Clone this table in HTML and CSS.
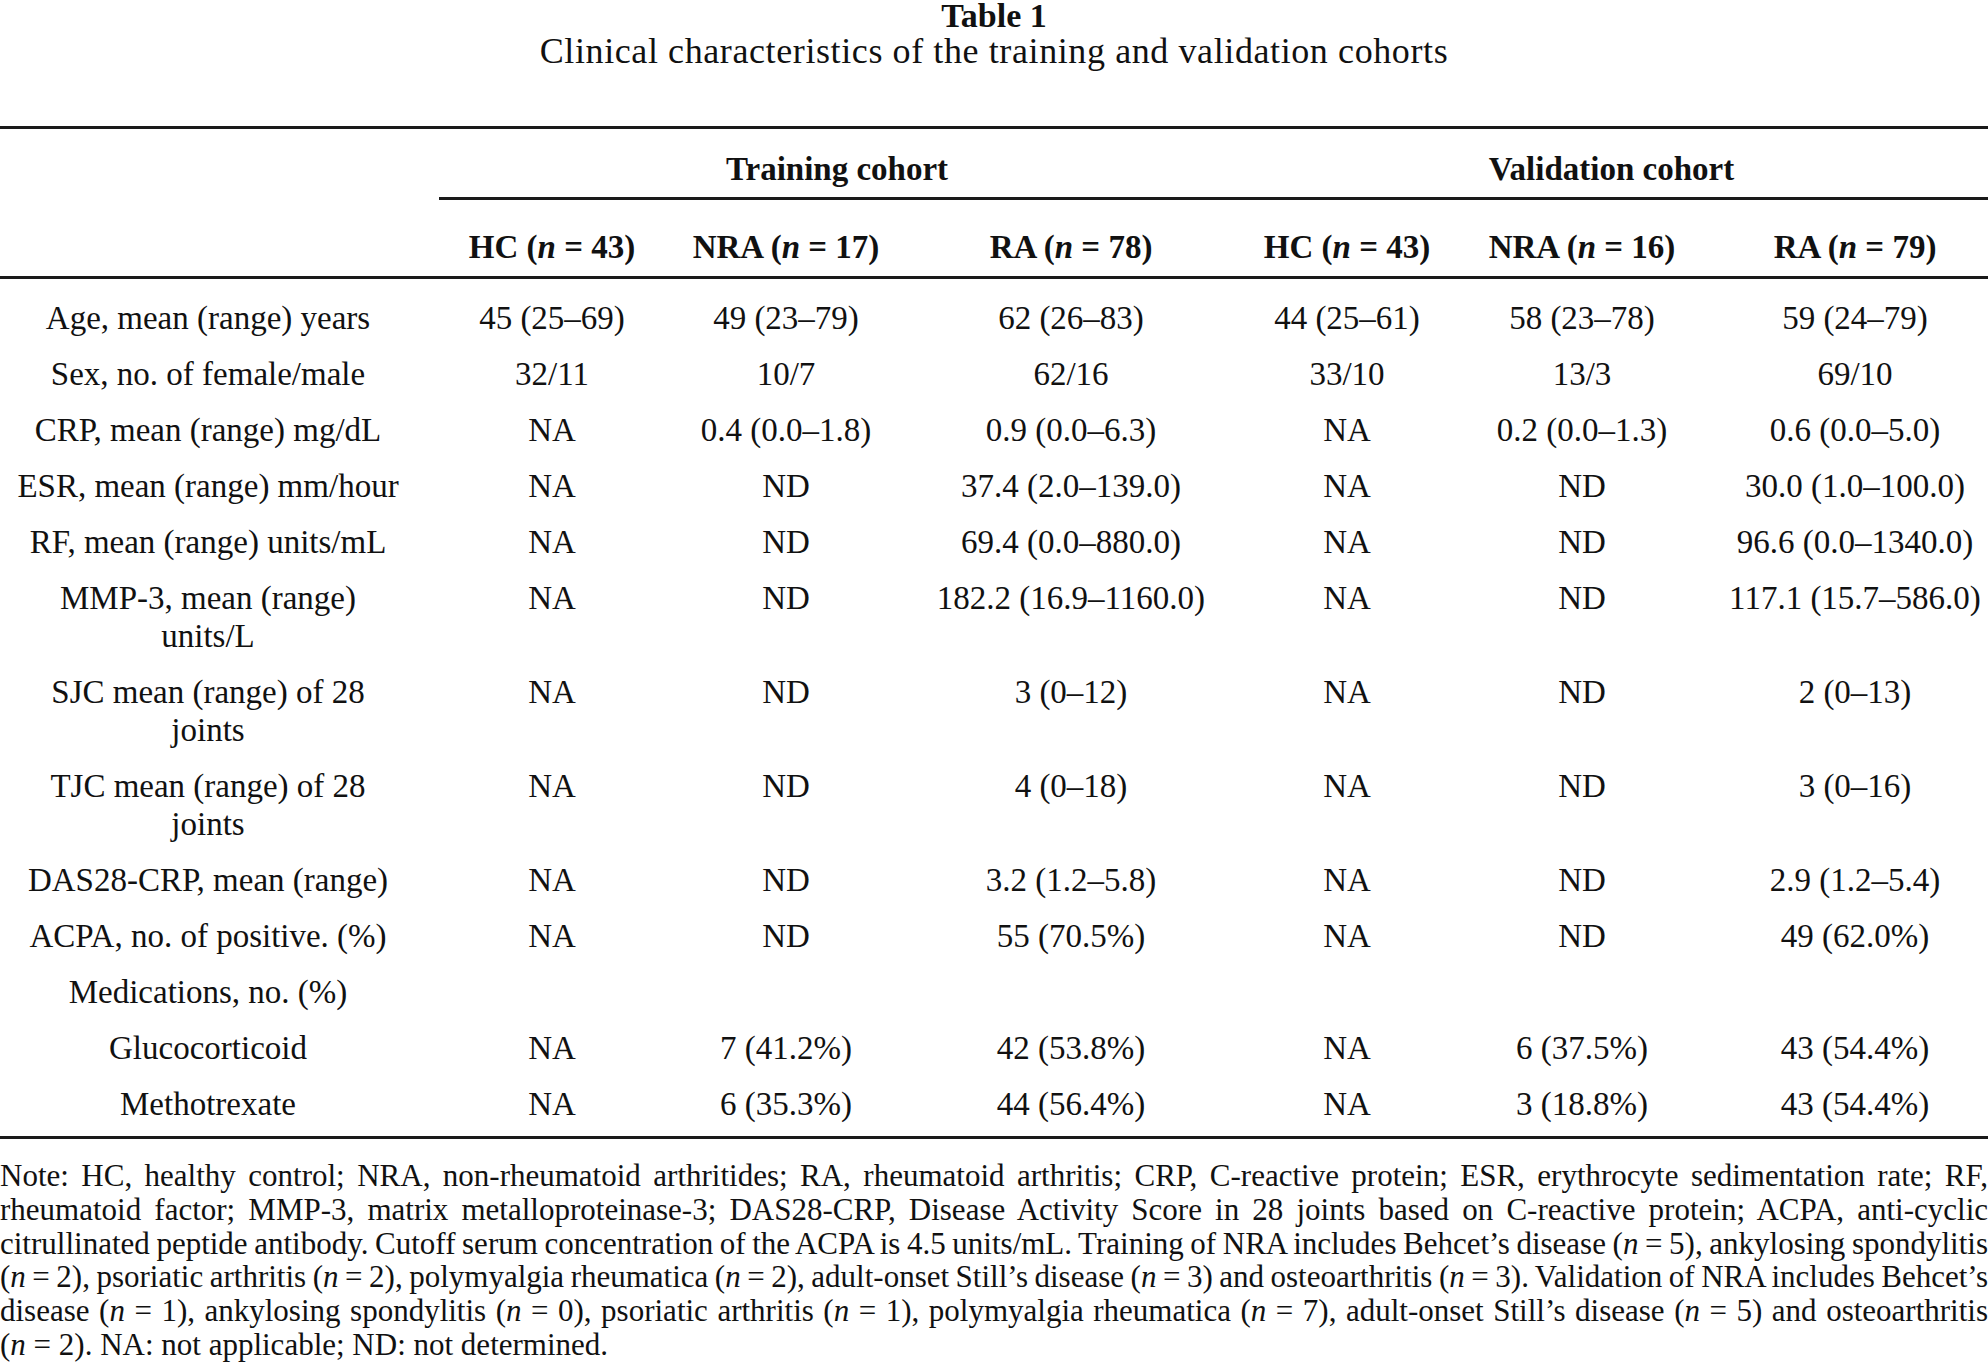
FILE: index.html
```
<!DOCTYPE html>
<html>
	<head>
		<meta charset="UTF-8" />
		<meta name="viewport" content="width=device-width, initial-scale=1.0" />
		<title>Table 1 - Clinical characteristics of the training and validation cohorts</title>
		<link rel="stylesheet" href="styles.css">
	</head>

	<body>
		<div class="caption">
			<p class="caption-label">Table 1</p>
			<p class="caption-title">Clinical characteristics of the training and validation cohorts</p>
		</div>

		<table class="cohorts">
			<colgroup>
				<col class="c-label">
				<col class="c-hc">
				<col class="c-nra">
				<col class="c-ra">
				<col class="c-hc2">
				<col class="c-nra2">
				<col class="c-ra2">
			</colgroup>
			<thead>
				<tr class="cohort-row">
					<th></th>
					<th colspan="3" class="cohort">Training cohort</th>
					<th colspan="3" class="cohort">Validation cohort</th>
				</tr>
				<tr class="group-row">
					<th></th>
					<th>HC (<i>n</i> = 43)</th>
					<th>NRA (<i>n</i> = 17)</th>
					<th>RA (<i>n</i> = 78)</th>
					<th>HC (<i>n</i> = 43)</th>
					<th>NRA (<i>n</i> = 16)</th>
					<th class="last">RA (<i>n</i> = 79)</th>
				</tr>
			</thead>
			<tbody>
				<tr>
					<td class="label">Age, mean (range) years</td>
					<td>45 (25–69)</td><td>49 (23–79)</td><td>62 (26–83)</td>
					<td>44 (25–61)</td><td>58 (23–78)</td><td class="last">59 (24–79)</td>
				</tr>
				<tr>
					<td class="label">Sex, no. of female/male</td>
					<td>32/11</td><td>10/7</td><td>62/16</td>
					<td>33/10</td><td>13/3</td><td class="last">69/10</td>
				</tr>
				<tr>
					<td class="label">CRP, mean (range) mg/dL</td>
					<td>NA</td><td>0.4 (0.0–1.8)</td><td>0.9 (0.0–6.3)</td>
					<td>NA</td><td>0.2 (0.0–1.3)</td><td class="last">0.6 (0.0–5.0)</td>
				</tr>
				<tr>
					<td class="label">ESR, mean (range) mm/hour</td>
					<td>NA</td><td>ND</td><td>37.4 (2.0–139.0)</td>
					<td>NA</td><td>ND</td><td class="last">30.0 (1.0–100.0)</td>
				</tr>
				<tr>
					<td class="label">RF, mean (range) units/mL</td>
					<td>NA</td><td>ND</td><td>69.4 (0.0–880.0)</td>
					<td>NA</td><td>ND</td><td class="last">96.6 (0.0–1340.0)</td>
				</tr>
				<tr>
					<td class="label">MMP-3, mean (range) units/L</td>
					<td>NA</td><td>ND</td><td>182.2 (16.9–1160.0)</td>
					<td>NA</td><td>ND</td><td class="last">117.1 (15.7–586.0)</td>
				</tr>
				<tr>
					<td class="label">SJC mean (range) of 28 joints</td>
					<td>NA</td><td>ND</td><td>3 (0–12)</td>
					<td>NA</td><td>ND</td><td class="last">2 (0–13)</td>
				</tr>
				<tr>
					<td class="label">TJC mean (range) of 28 joints</td>
					<td>NA</td><td>ND</td><td>4 (0–18)</td>
					<td>NA</td><td>ND</td><td class="last">3 (0–16)</td>
				</tr>
				<tr>
					<td class="label">DAS28-CRP, mean (range)</td>
					<td>NA</td><td>ND</td><td>3.2 (1.2–5.8)</td>
					<td>NA</td><td>ND</td><td class="last">2.9 (1.2–5.4)</td>
				</tr>
				<tr>
					<td class="label">ACPA, no. of positive. (%)</td>
					<td>NA</td><td>ND</td><td>55 (70.5%)</td>
					<td>NA</td><td>ND</td><td class="last">49 (62.0%)</td>
				</tr>
				<tr>
					<td class="label">Medications, no. (%)</td>
					<td></td><td></td><td></td>
					<td></td><td></td><td class="last"></td>
				</tr>
				<tr>
					<td class="label">Glucocorticoid</td>
					<td>NA</td><td>7 (41.2%)</td><td>42 (53.8%)</td>
					<td>NA</td><td>6 (37.5%)</td><td class="last">43 (54.4%)</td>
				</tr>
				<tr>
					<td class="label">Methotrexate</td>
					<td>NA</td><td>6 (35.3%)</td><td>44 (56.4%)</td>
					<td>NA</td><td>3 (18.8%)</td><td class="last">43 (54.4%)</td>
				</tr>
			</tbody>
		</table>

		<!-- the printed note is broken by hand, one span per typeset line -->
		<p class="note">
			<span class="line">Note: HC, healthy control; NRA, non-rheumatoid arthritides; RA, rheumatoid arthritis; CRP, C-reactive protein; ESR, erythrocyte sedimentation rate; RF,</span>
			<span class="line">rheumatoid factor; MMP-3, matrix metalloproteinase-3; DAS28-CRP, Disease Activity Score in 28 joints based on C-reactive protein; ACPA, anti-cyclic</span>
			<span class="line">citrullinated peptide antibody. Cutoff serum concentration of the ACPA is 4.5 units/mL. Training of NRA includes Behcet’s disease (<i>n</i> = 5), ankylosing spondylitis</span>
			<span class="line">(<i>n</i> = 2), psoriatic arthritis (<i>n</i> = 2), polymyalgia rheumatica (<i>n</i> = 2), adult-onset Still’s disease (<i>n</i> = 3) and osteoarthritis (<i>n</i> = 3). Validation of NRA includes Behcet’s</span>
			<span class="line">disease (<i>n</i> = 1), ankylosing spondylitis (<i>n</i> = 0), psoriatic arthritis (<i>n</i> = 1), polymyalgia rheumatica (<i>n</i> = 7), adult-onset Still’s disease (<i>n</i> = 5) and osteoarthritis</span>
			<span class="line end">(<i>n</i> = 2). NA: not applicable; ND: not determined.</span>
		</p>
	</body>
</html>
```

FILE: styles.css
```
    html, body {
	    margin:0px; padding:0px;
	    background:rgb(255, 255, 255); color:rgb(17, 17, 17);
    }

    body {
	    font-family: "Liberation Serif", "Times New Roman", serif;
	    font-size:33px;
	    width:1988px;
    }

    /* caption above the table */
    .caption       { text-align:center; padding-top:1px }
    .caption p     { margin:0px }
    .caption-label { font-weight:bold; font-size:34px; line-height:30px }
    .caption-title { font-size:36px; line-height:38px; letter-spacing:0.6px; margin-top:1px !important }

    /* the table itself: three rules, no vertical lines */
    .cohorts {
	    width:1988px;
	    margin-top:56px;
	    table-layout:fixed;
	    border-collapse:separate; border-spacing:0px;
	    border-top:3px solid rgb(26, 26, 26);
	    border-bottom:3px solid rgb(26, 26, 26);
    }

    .c-label { width:439px }
    .c-hc    { width:226px }
    .c-nra   { width:242px }
    .c-ra    { width:328px }
    .c-hc2   { width:224px }
    .c-nra2  { width:246px }
    .c-ra2   { width:283px }

    th, td {
	    padding:9px 0px;
	    line-height:38px;
	    text-align:center;
	    vertical-align:top;
	    font-weight:normal;
    }

    th { font-weight:bold }

    .cohort-row th { padding-top:21px; padding-bottom:9px }
    .cohort-row .cohort { border-bottom:3px solid rgb(26, 26, 26) }

    .group-row th {
	    padding-top:28px; padding-bottom:10px;
	    border-bottom:3px solid rgb(26, 26, 26);
    }

    tbody tr:first-child td { padding-top:20px }
    tbody tr:last-child td  { padding-bottom:13px }

    td.label { padding-left:14px; padding-right:37px } /* keeps the wrap of the long labels */
    .last    { padding-left:17px !important }

    .note {
	    margin:20px 0px 0px 0px;
	    font-size:31px;
	    line-height:33.8px;
	    word-spacing:-3px; /* the print face sets a little tighter */
    }

    .note .line     { display:block; text-align:justify; text-align-last:justify }
    .note .line.end { text-align-last:left; word-spacing:normal }
```
